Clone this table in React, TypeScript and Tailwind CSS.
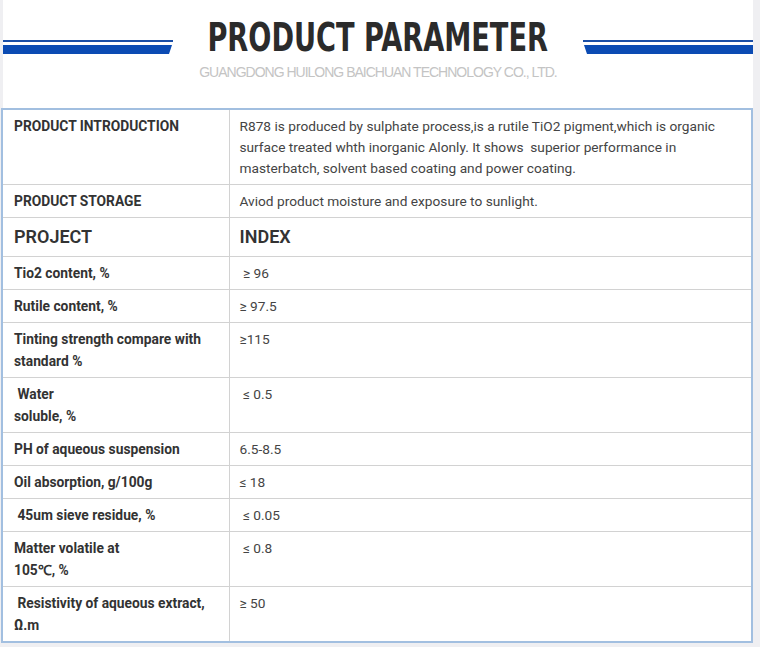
import React from 'react';

type Row = { label: React.ReactNode; value: React.ReactNode };

const rows: Row[] = [
  { label: 'Tio2 content, %', value: '\u00a0≥ 96' },
  { label: 'Rutile content, %', value: '≥ 97.5' },
  { label: <>Tinting strength compare with<br />standard %</>, value: '≥115' },
  { label: <>{'\u00a0'}Water<br />soluble, %</>, value: '\u00a0≤ 0.5' },
  { label: 'PH of aqueous suspension', value: '6.5-8.5' },
  { label: 'Oil absorption, g/100g', value: '≤ 18' },
  { label: '\u00a045um sieve residue, %', value: '\u00a0≤ 0.05' },
  { label: <>Matter volatile at<br />105℃, %</>, value: '\u00a0≤ 0.8' },
  { label: <>{'\u00a0'}Resistivity of aqueous extract,<br />Ω.m</>, value: '≥ 50' },
];

function Stripe({ flip }: { flip?: boolean }) {
  return (
    <svg width="170" height="20" viewBox="0 0 170 20" className={flip ? '-scale-x-100' : ''}>
      <rect x="0" y="0" width="170" height="2" fill="#1a4ea6" />
      <polygon points="0,5 169,5 166,14 0,14" fill="#0b4bb3" />
    </svg>
  );
}

export default function App() {
  const line = 'border-b border-[#d2d2d2]';
  const left = 'border-r border-[#d2d2d2] pl-[11px] pr-2 align-top w-[226px] text-[#333]';
  const right = 'pl-[10px] pr-2 align-top';
  const labelText = 'py-[5px] text-[13.8px] font-bold leading-[22px]';
  const valueText = 'py-[5px] text-[13.7px] text-[#444] leading-[22px]';

  return (
    <div className="min-h-[647px] bg-[#efeff2] font-['Roboto',sans-serif] overflow-hidden">
      <div className="ml-[3px] w-[750px] bg-white">
        <div className="flex items-start h-[108px]">
          <div className="mt-[40px] w-[170px] shrink-0"><Stripe /></div>
          <div className="w-[410px] shrink-0 flex flex-col items-center">
            <div className="mt-[17px] h-[40px] w-full flex items-center justify-center">
              <span className="inline-block scale-x-[0.775] whitespace-nowrap font-['DejaVu_Sans_Condensed','DejaVu_Sans',sans-serif] font-bold text-[39px] leading-none text-[#2b2b2b]">
                PRODUCT PARAMETER
              </span>
            </div>
            <div className="mt-[8px] w-full flex justify-center whitespace-nowrap font-['Liberation_Sans',sans-serif] text-[14px] leading-none text-[#c4c4c4] tracking-[-1px]">
              GUANGDONG HUILONG BAICHUAN TECHNOLOGY CO., LTD.
            </div>
          </div>
          <div className="mt-[40px] w-[170px] shrink-0"><Stripe flip /></div>
        </div>
      </div>
      <div className="ml-[1px] w-[752px] border-2 border-[#a2bfe0] bg-white">
        <table className="w-full border-collapse">
          <tbody>
            <tr className={line}>
              <td className={`${left} pt-[6px] pb-[5px] text-[13.8px] font-bold leading-[21px]`}>PRODUCT INTRODUCTION</td>
              <td className={`${right} pt-[6px] pb-[5px] text-[13.7px] text-[#444] leading-[21px]`}>
                R878 is produced by sulphate process,is a rutile TiO2 pigment,which is organic surface treated whth inorganic Alonly. It shows&nbsp; superior performance in masterbatch, solvent based coating and power coating.
              </td>
            </tr>
            <tr className={line}>
              <td className={`${left} ${labelText}`}>PRODUCT STORAGE</td>
              <td className={`${right} ${valueText}`}>Aviod product moisture and exposure to sunlight.</td>
            </tr>
            <tr className={line}>
              <td className={`${left} py-[5px] text-[18px] font-semibold leading-[28px]`}>PROJECT</td>
              <td className={`${right} py-[5px] text-[18px] font-semibold text-[#333] leading-[28px]`}>INDEX</td>
            </tr>
            {rows.map((r, i) => (
              <tr key={i} className={i === rows.length - 1 ? '' : line}>
                <td className={`${left} ${labelText}`}>{r.label}</td>
                <td className={`${right} ${valueText}`}>{r.value}</td>
              </tr>
            ))}
          </tbody>
        </table>
      </div>
    </div>
  );
}
